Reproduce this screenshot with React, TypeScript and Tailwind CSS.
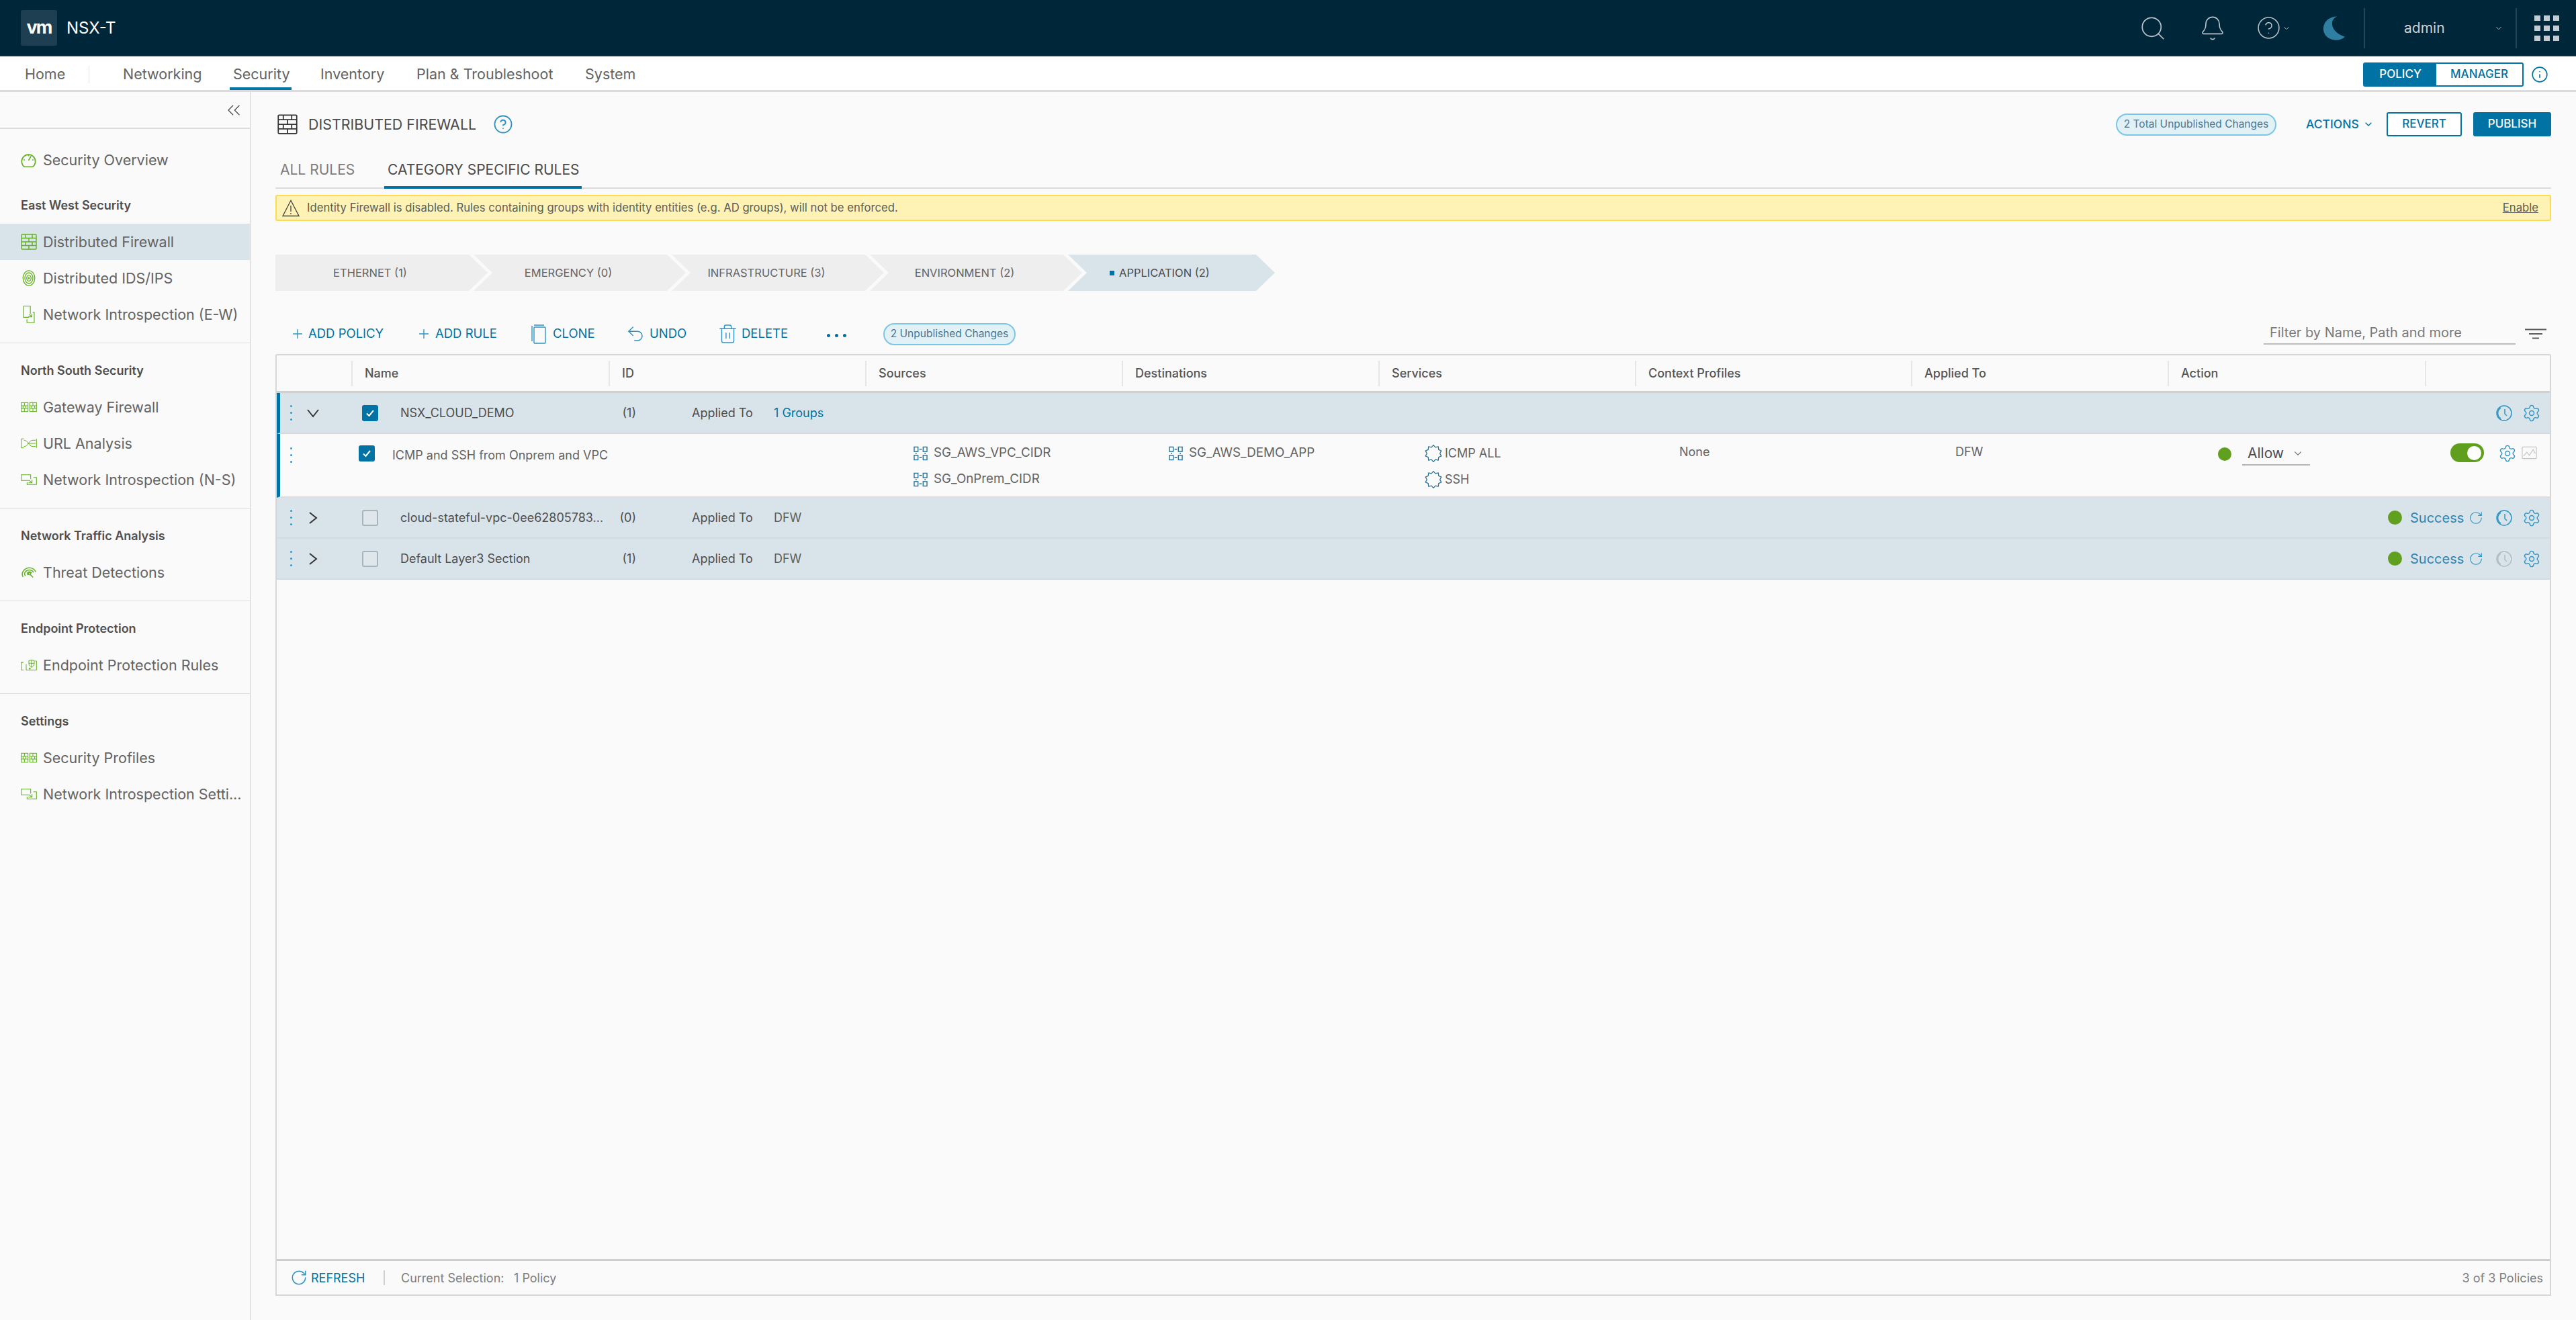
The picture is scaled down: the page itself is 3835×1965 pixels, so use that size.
import { Bell, ChevronDown, ChevronsLeft, CircleHelp, Info, Plus, RotateCw, Search, Settings, Trash2, Undo2 } from "lucide-react"

type IconProps = { className?: string }

const Firewall = ({ className }: IconProps) => (
    <svg viewBox="0 0 24 24" fill="none" stroke="currentColor" strokeWidth="1.4" className={className}>
        <rect x="1" y="1" width="22" height="22" rx="1" />
        <path d="M1 6.500h22M1 12h22M1 17.500h22M7 1v5.500M17 1v5.500M12 6.500V12M7 12v5.500M17 12v5.500M12 17.500V23" />
    </svg>
)

const DoubleWall = ({ className }: IconProps) => (
    <svg viewBox="0 0 36 22" fill="none" stroke="currentColor" strokeWidth="1.6" className={className}>
        <rect x="1" y="1" width="15" height="20" />
        <rect x="20" y="1" width="15" height="20" />
        <path d="M1 8h15M1 14h15M8 1v7M5 8v6M11 8v6M8 14v7M20 8h15M20 14h15M27 1v7M24 8v6M31 8v6M27 14v7" />
    </svg>
)

const Introspect = ({ className }: IconProps) => (
    <svg viewBox="0 0 36 24" fill="none" stroke="currentColor" strokeWidth="1.6" className={className}>
        <path d="M20 14H1V1h21v10" />
        <path d="M28 7h7v16H14v-5" />
        <path d="M17 19h8v-7M25 19l-6-5" />
    </svg>
)

const Introspect2 = ({ className }: IconProps) => (
    <svg viewBox="0 0 24 36" fill="none" stroke="currentColor" strokeWidth="1.6" className={className}>
        <path d="M12 24H1V1h14v16" />
        <path d="M20 14h3v21H8v-7" />
        <path d="M11 23h7v-6M18 23l-5-5" />
    </svg>
)

const Gauge = ({ className }: IconProps) => (
    <svg viewBox="0 0 24 28" fill="none" stroke="currentColor" strokeWidth="1.8" className={className}>
        <path d="M5 25a11 11 0 1 1 14 0z" />
        <path d="M12 15l4-7M4 14h2M18 14h2M12 6v2" />
    </svg>
)

const Rings = ({ className }: IconProps) => (
    <svg viewBox="0 0 24 30" fill="none" stroke="currentColor" strokeWidth="1.6" className={className}>
        <ellipse cx="12" cy="15" rx="11" ry="14" />
        <ellipse cx="12" cy="15" rx="7.500" ry="10" />
        <ellipse cx="12" cy="15" rx="4" ry="5.500" />
        <ellipse cx="12" cy="15" rx="1" ry="1.500" />
    </svg>
)

const UrlIcon = ({ className }: IconProps) => (
    <svg viewBox="0 0 36 22" fill="none" stroke="currentColor" strokeWidth="1.5" className={className}>
        <path d="M1 1v20h6M1 1h6M35 1v20" />
        <path d="M7 4c10 0 10 14 20 14h6M7 18c10 0 10-14 20-14h6M15 11h18" />
    </svg>
)

const Threat = ({ className }: IconProps) => (
    <svg viewBox="0 0 34 24" fill="none" stroke="currentColor" strokeWidth="2.2" className={className}>
        <path d="M5 22C-1 12 9 2 19 2c6 0 11 3 14 9" />
        <path d="M10 20C5 13 12 7 19 7c4 0 7 2 9 5" />
        <path d="M15 18c-3-4 1-7 4-7 2 0 4 1 5 3" />
        <circle cx="19" cy="15" r="2.400" />
        <path d="M21 17l6 6" />
    </svg>
)

const EndpointIcon = ({ className }: IconProps) => (
    <svg viewBox="0 0 36 24" fill="none" stroke="currentColor" strokeWidth="1.5" className={className}>
        <path d="M5 6H1v17h5M1 6h5M12 10v13h23V3h-3" />
        <path d="M18 2l6-1 6 1v7c0 4-3 6-6 8-3-2-6-4-6-8zM24 1v16M18 8h12" />
        <rect x="19" y="19" width="2" height="2" fill="currentColor" />
    </svg>
)

const GroupIcon = ({ className }: IconProps) => (
    <svg viewBox="0 0 22 22" fill="none" stroke="currentColor" strokeWidth="1.5" className={className}>
        <rect x="1" y="1" width="6" height="7" />
        <rect x="15" y="1" width="6" height="7" />
        <rect x="1" y="14" width="6" height="7" />
        <rect x="15" y="14" width="6" height="7" />
        <path d="M9 4.500h4M9 17.500h4M4 10v2M18 10v2" />
    </svg>
)

const serviceOutline = Array.from({ length: 20 }, (_, i) => {
    const r = i % 2 ? 9.6 : 12.4
    const a = (i * Math.PI) / 10
    return `${13 + r * Math.sin(a)},${13 - r * Math.cos(a)}`
}).join(" ")

const ServiceIcon = ({ className }: IconProps) => (
    <svg viewBox="0 0 26 26" fill="none" stroke="currentColor" strokeWidth="1.3" strokeLinejoin="round" className={className}>
        <polygon points={serviceOutline} />
    </svg>
)

const Clock = ({ className }: IconProps) => (
    <svg viewBox="0 0 24 24" fill="none" stroke="currentColor" strokeWidth="1.5" className={className}>
        <circle cx="12" cy="12" r="11" />
        <path d="M7 4a9.500 9.500 0 0 0 0 16" />
        <path d="M13 6v7l3 3" />
    </svg>
)

const Moon = ({ className }: IconProps) => (
    <svg viewBox="0 0 36 38" className={className}>
        <path d="M22 1C10 5 11 25 34 32c-5 4-10 6-16 5C7 36 0 28 1 18 2 8 11 1 22 1z" fill="#2f7fa3" />
    </svg>
)

const Warning = ({ className }: IconProps) => (
    <svg viewBox="0 0 26 26" fill="none" stroke="currentColor" strokeWidth="1.3" className={className}>
        <path d="M13 1.500L1 24.500h24z" />
        <path d="M13 9v9M13 20v2" />
    </svg>
)

const CloneIcon = ({ className }: IconProps) => (
    <svg viewBox="0 0 22 30" fill="none" stroke="currentColor" strokeWidth="1.4" className={className}>
        <rect x="4" y="5" width="17" height="24" rx="1" />
        <path d="M4 2h15M1 3v23" />
    </svg>
)

const FilterIcon = ({ className }: IconProps) => (
    <svg viewBox="0 0 32 16" stroke="currentColor" strokeWidth="2" className={className}>
        <path d="M0 1.500h32M6 8h20M11 14.500h10" />
    </svg>
)

const ChartBox = ({ className }: IconProps) => (
    <svg viewBox="0 0 24 20" fill="none" stroke="currentColor" strokeWidth="1.2" className={className}>
        <rect x="1" y="1" width="22" height="18" rx="1" />
        <path d="M3 15l5-6 4 5 6-9 3 6" />
    </svg>
)

const Caret = ({ open }: { open?: boolean }) => (
    <svg viewBox="0 0 24 24" fill="none" stroke="#333" strokeWidth="2" className="h-[24px] w-[24px]">
        <path d={open ? "M4 7l8 10 8-10" : "M7 4l10 8-10 8"} />
    </svg>
)

const DragDots = () => (
    <span className="flex h-[23px] w-[3px] flex-col justify-between">
        <span className="h-[3px] w-[3px] rounded-full bg-[#2f93c4]" />
        <span className="h-[3px] w-[3px] rounded-full bg-[#2f93c4]" />
        <span className="h-[3px] w-[3px] rounded-full bg-[#2f93c4]" />
    </span>
)

const Check = ({ checked }: { checked?: boolean }) =>
    checked ? (
        <span className="flex h-[24px] w-[24px] items-center justify-center rounded-[3px] bg-[#0072a3]">
            <svg viewBox="0 0 14 14" fill="none" stroke="#fff" strokeWidth="2" className="h-[14px] w-[14px]">
                <path d="M2 7.500l3.500 3.500L12 3" />
            </svg>
        </span>
    ) : (
        <span className="block h-[24px] w-[24px] rounded-[3px] border-2 border-[#a8b4bb] bg-[#dfe7ec]" />
    )

const Pill = ({ label, className }: { label: string; className: string }) => (
    <span className={`flex items-center justify-center rounded-full border-2 border-[#79c6e6] bg-[#e1f1f6] text-[15.5px] whitespace-nowrap text-[#4a7591] ${className}`}>
        {label}
    </span>
)

const sideSections = [
    {
        label: "North South Security",
        items: [
            { label: "Gateway Firewall", icon: <DoubleWall className="h-[22px] w-[24px]" /> },
            { label: "URL Analysis", icon: <UrlIcon className="h-[22px] w-[24px]" /> },
            { label: "Network Introspection (N-S)", icon: <Introspect className="h-[24px] w-[24px]" /> },
        ],
    },
    {
        label: "Network Traffic Analysis",
        items: [{ label: "Threat Detections", icon: <Threat className="h-[22px] w-[23px]" /> }],
    },
    {
        label: "Endpoint Protection",
        items: [{ label: "Endpoint Protection Rules", icon: <EndpointIcon className="h-[24px] w-[24px]" /> }],
    },
    {
        label: "Settings",
        items: [
            { label: "Security Profiles", icon: <DoubleWall className="h-[22px] w-[24px]" /> },
            { label: "Network Introspection Setti...", icon: <Introspect className="h-[24px] w-[24px]" /> },
        ],
    },
]

function SideItem({ icon, label, active }: { icon: React.ReactNode; label: string; active?: boolean }) {
    return (
        <div className={`flex h-[54px] items-center pl-[31px] ${active ? "bg-[#d9e4ea]" : ""}`}>
            <span className="flex w-[33px] items-center text-[#62b31f]">{icon}</span>
            <span className="text-[21.5px] whitespace-nowrap text-[#636363]">{label}</span>
        </div>
    )
}

const SideLabel = ({ label }: { label: string }) => (
    <div className="flex h-[68px] items-start pt-[27px] pl-[31px] text-[18px] font-semibold whitespace-nowrap text-[#4f4f4f]">{label}</div>
)

function Sidebar() {
    return (
        <aside className="h-full w-[374px] shrink-0 border-r-2 border-[#e3e3e3] bg-[#fafafa]">
            <div className="flex h-[55px] items-center justify-end border-b-2 border-[#dcdcdc] pr-[8px]">
                <ChevronsLeft className="h-[32px] w-[32px] text-[#565656]" strokeWidth={1.1} />
            </div>
            <div className="pt-[19px]">
                <SideItem label="Security Overview" icon={<Gauge className="h-[26px] w-[23px]" />} />
                <SideLabel label="East West Security" />
                <SideItem active label="Distributed Firewall" icon={<Firewall className="h-[24px] w-[24px]" />} />
                <SideItem label="Distributed IDS/IPS" icon={<Rings className="h-[24px] w-[24px]" />} />
                <SideItem label="Network Introspection (E-W)" icon={<Introspect2 className="h-[26px] w-[24px]" />} />
            </div>
            {sideSections.map((section) => (
                <div key={section.label} className="mt-[15px] border-t border-[#dedede] first:mt-[16px]">
                    <SideLabel label={section.label} />
                    {section.items.map((item) => (
                        <SideItem key={item.label} label={item.label} icon={item.icon} />
                    ))}
                </div>
            ))}
        </aside>
    )
}

function TopBar() {
    return (
        <header className="flex h-[84px] items-center border-b border-[#3c5a6a] bg-[#00263a] text-[#c9d1d6]">
            <div className="ml-[31px] flex h-[53px] w-[54px] items-center justify-center rounded-[3px] bg-[#1d3f51] text-[27px] font-bold tracking-[-2px] text-white">vm</div>
            <div className="ml-[14px] text-[24px] whitespace-nowrap text-white">NSX-T</div>
            <Search className="ml-auto h-[42px] w-[42px] text-[#b8c2c8]" strokeWidth={1} />
            <Bell className="ml-[48px] h-[40px] w-[40px] text-[#b8c2c8]" strokeWidth={1} />
            <CircleHelp className="ml-[45px] h-[37px] w-[37px] text-[#b8c2c8]" strokeWidth={1} />
            <ChevronDown className="ml-[1px] h-[14px] w-[14px] text-[#b8c2c8]" strokeWidth={1.5} />
            <Moon className="ml-[47px] h-[38px] w-[35px]" />
            <span className="ml-[26px] h-[60px] w-[2px] bg-[#22465a]" />
            <span className="ml-[58px] w-[61px] text-[21px] text-[#c9d1d6]">admin</span>
            <ChevronDown className="ml-[73px] h-[14px] w-[14px] text-[#b8c2c8]" strokeWidth={1.5} />
            <span className="ml-[18px] h-[60px] w-[2px] bg-[#22465a]" />
            <div className="mr-[25px] ml-[26px] grid grid-cols-3 gap-x-[5px] gap-y-[7px]">
                {Array.from({ length: 9 }).map((_, i) => (
                    <span key={i} className="h-[8px] w-[9px] bg-[#c4ccd1]" />
                ))}
            </div>
        </header>
    )
}

function NavBar() {
    return (
        <nav className="flex h-[53px] items-center border-b-[3px] border-[#dcdcdc] bg-white pt-[3px] text-[21.5px] whitespace-nowrap text-[#636363]">
            <span className="ml-[37px] w-[59px]">Home</span>
            <span className="ml-[36px] h-[26px] w-[1px] bg-[#e4e4e4]" />
            <span className="ml-[50px] w-[115px]">Networking</span>
            <span className="relative ml-[49px] flex h-full w-[81px] items-center">
                Security
                <span className="absolute top-[43px] -right-[6px] -left-[5px] h-[4px] bg-[#0072a3]" />
            </span>
            <span className="ml-[49px] w-[94px]">Inventory</span>
            <span className="ml-[49px] w-[203px]">Plan &amp; Troubleshoot</span>
            <span className="ml-[48px] w-[74px]">System</span>
            <div className="ml-auto flex h-[36px] w-[239px] overflow-hidden rounded-[3px] border-2 border-[#0072a3] text-[17px] font-medium">
                <span className="flex w-[107px] items-center justify-center bg-[#0072a3] text-white">POLICY</span>
                <span className="flex flex-1 items-center justify-center bg-white text-[#0072a3]">MANAGER</span>
            </div>
            <Info className="mr-[41px] ml-[11px] h-[26px] w-[26px] text-[#0072a3]" strokeWidth={1.5} />
        </nav>
    )
}

const categories = [
    { label: "ETHERNET (1)", shape: "ml-0 [clip-path:polygon(0_0,288px_0,316px_50%,288px_100%,0_100%)]" },
    { label: "EMERGENCY (0)", shape: "-ml-[21px] [clip-path:polygon(0_0,288px_0,316px_50%,288px_100%,0_100%,28px_50%)]" },
    { label: "INFRASTRUCTURE (3)", shape: "-ml-[21px] [clip-path:polygon(0_0,288px_0,316px_50%,288px_100%,0_100%,28px_50%)]" },
    { label: "ENVIRONMENT (2)", shape: "-ml-[21px] [clip-path:polygon(0_0,288px_0,316px_50%,288px_100%,0_100%,28px_50%)]" },
]

function Categories() {
    return (
        <div className="mt-[50px] flex h-[54px]">
            {categories.map((c) => (
                <div key={c.label} className={`flex h-full w-[316px] items-center bg-[#eeeeee] text-[16.5px] text-[#636363] ${c.shape}`}>
                    <span className="w-[282px] text-center">{c.label}</span>
                </div>
            ))}
            <div className="-ml-[21px] flex h-full w-[308px] items-center bg-[#d9e4ea] text-[16.5px] text-[#4a4a4a] [clip-path:polygon(0_0,280px_0,308px_50%,280px_100%,0_100%,28px_50%)]">
                <span className="ml-[62px] h-[7px] w-[7px] bg-[#0072a3]" />
                <span className="ml-[7px] whitespace-nowrap">APPLICATION (2)</span>
            </div>
        </div>
    )
}

function Toolbar() {
    const text = "text-[18.5px] text-[#0072a3] whitespace-nowrap"
    return (
        <div className="mt-[46px] flex h-[36px] items-center text-[#0072a3]">
            <Plus className="ml-[22px] h-[22px] w-[22px] text-[#2f93c4]" strokeWidth={1.5} />
            <span className={`ml-[5px] w-[113px] ${text}`}>ADD POLICY</span>
            <Plus className="ml-[48px] h-[22px] w-[22px] text-[#2f93c4]" strokeWidth={1.5} />
            <span className={`ml-[6px] w-[94px] ${text}`}>ADD RULE</span>
            <CloneIcon className="ml-[49px] h-[32px] w-[22px] text-[#2f93c4]" />
            <span className={`ml-[10px] w-[62px] ${text}`}>CLONE</span>
            <Undo2 className="ml-[46px] h-[32px] w-[30px] text-[#2f93c4]" strokeWidth={1.2} />
            <span className={`ml-[6px] w-[55px] ${text}`}>UNDO</span>
            <Trash2 className="ml-[46px] h-[34px] w-[31px] text-[#2f93c4]" strokeWidth={1.1} />
            <span className={`ml-[5px] w-[70px] ${text}`}>DELETE</span>
            <span className="ml-[57px] flex w-[29px] justify-between pt-[4px]">
                <span className="h-[5px] w-[5px] rounded-full bg-[#0072a3]" />
                <span className="h-[5px] w-[5px] rounded-full bg-[#0072a3]" />
                <span className="h-[5px] w-[5px] rounded-full bg-[#0072a3]" />
            </span>
            <Pill label="2 Unpublished Changes" className="ml-[55px] h-[33px] w-[197px]" />
            <div className="-mt-[2px] ml-auto flex h-[34px] w-[375px] items-center border-b-2 border-[#bdbdbd] pl-[9px] text-[20px] whitespace-nowrap text-[#7a7a7a]">Filter by Name, Path and more</div>
            <FilterIcon className="mr-[7px] ml-[14px] h-[16px] w-[32px] text-[#5c5c5c]" />
        </div>
    )
}

const columns = [
    { label: "", width: "w-[111px]" },
    { label: "Name", width: "w-[383px]" },
    { label: "ID", width: "w-[382px]" },
    { label: "Sources", width: "w-[382px]" },
    { label: "Destinations", width: "w-[382px]" },
    { label: "Services", width: "w-[382px]" },
    { label: "Context Profiles", width: "w-[411px]" },
    { label: "Applied To", width: "w-[382px]" },
    { label: "Action", width: "w-[383px]" },
    { label: "", width: "flex-1" },
]

function TableHead() {
    return (
        <div className="flex h-[56px] shrink-0 items-center border-b-[3px] border-[#d0d0d0] text-[18px] font-medium text-[#565656]">
            {columns.map((col, i) => (
                <div key={i} className={`flex h-[38px] items-center pl-[18px] ${col.width} ${i > 0 ? "border-l-2 border-[#e6e6e6]" : ""}`}>
                    {col.label}
                </div>
            ))}
        </div>
    )
}

function GroupRow(props: { open?: boolean; name: string; id: string; target: string; targetLink?: boolean; checked?: boolean; success?: boolean; clockOff?: boolean; selected?: boolean }) {
    const { open, name, id, target, targetLink, checked, success, clockOff, selected } = props
    return (
        <div className={`flex h-[61px] shrink-0 items-center border-b-2 border-[#d3dadf] bg-[#d9e4ea] text-[18px] text-[#4d4d4d] ${selected ? "border-l-[5px] border-l-[#0072a3]" : "pl-[5px]"}`}>
            <span className="flex w-[18px] justify-end"><DragDots /></span>
            <span className="ml-[19px] w-[24px]"><Caret open={open} /></span>
            <span className="ml-[61px] w-[24px]"><Check checked={checked} /></span>
            <span className="ml-[33px] w-[325px] truncate">{name}</span>
            <span className="w-[26px] text-right">{id}</span>
            <span className="ml-[83px] w-[122px] whitespace-nowrap">Applied To</span>
            <span className={targetLink ? "text-[#0072a3]" : "text-[#5c5c5c]"}>{target}</span>
            <div className="ml-auto flex items-center">
                {success && (
                    <>
                        <span className="h-[21px] w-[21px] rounded-full bg-[#60a01e]" />
                        <span className="ml-[12px] w-[87px] text-[20px] text-[#2f84b4]">Success</span>
                        <RotateCw className="h-[22px] w-[22px] text-[#2f93c4]" strokeWidth={1.3} />
                    </>
                )}
                <Clock className={`ml-[19px] h-[24px] w-[24px] ${clockOff ? "text-[#aebcc4]" : "text-[#2f93c4]"}`} />
                <Settings className="mr-[13px] ml-[15px] h-[28px] w-[28px] text-[#2f93c4]" strokeWidth={1.2} />
            </div>
        </div>
    )
}

const NameTag = ({ icon, label }: { icon: React.ReactNode; label: string }) => (
    <div className="flex h-[39px] items-center whitespace-nowrap">
        <span className="w-[30px] text-[#2d7396]">{icon}</span>
        {label}
    </div>
)

function RuleRow() {
    const group = <GroupIcon className="h-[22px] w-[21px]" />
    const service = <ServiceIcon className="h-[26px] w-[26px]" />
    return (
        <div className="flex h-[95px] shrink-0 items-start border-b-2 border-[#dcdcdc] border-l-[5px] border-l-[#0072a3] bg-[#fafafa] text-[18px] text-[#636363]">
            <span className="flex w-[18px] justify-end pt-[20px]"><DragDots /></span>
            <span className="ml-[99px] w-[50px] pt-[17px]"><Check checked /></span>
            <span className="w-[776px] pt-[18px] whitespace-nowrap">ICMP and SSH from Onprem and VPC</span>
            <div className="w-[380px] pt-[9px] text-[18.8px]">
                <NameTag icon={group} label="SG_AWS_VPC_CIDR" />
                <NameTag icon={group} label="SG_OnPrem_CIDR" />
            </div>
            <div className="w-[381px] pt-[9px] text-[18.8px]">
                <NameTag icon={group} label="SG_AWS_DEMO_APP" />
            </div>
            <div className="w-[379px] pt-[9px]">
                <NameTag icon={service} label="ICMP ALL" />
                <NameTag icon={service} label="SSH" />
            </div>
            <span className="w-[411px] pt-[13px]">None</span>
            <span className="w-[391px] pt-[13px]">DFW</span>
            <span className="mt-[20px] h-[20px] w-[20px] rounded-full bg-[#60a01e]" />
            <div className="mt-[8px] ml-[16px] flex h-[39px] w-[101px] items-center border-b-2 border-[#b5b5b5] pt-[4px] pl-[8px] text-[21px] text-[#4d4d4d]">
                Allow
                <ChevronDown className="ml-[12px] h-[18px] w-[18px] text-[#777]" strokeWidth={1.5} />
            </div>
            <span className="mt-[14px] ml-[209px] flex h-[28px] w-[50px] items-center justify-end rounded-full bg-[#5f9f1d] pr-[4px]">
                <span className="h-[21px] w-[21px] rounded-full bg-white" />
            </span>
            <Settings className="mt-[15px] ml-[21px] h-[28px] w-[28px] text-[#2f93c4]" strokeWidth={1.2} />
            <ChartBox className="mt-[18px] ml-[7px] h-[20px] w-[23px] text-[#c2c2c2]" />
        </div>
    )
}

function RulesTable() {
    return (
        <div className="mt-[12px] flex h-[1402px] flex-col rounded-t-[3px] border-2 border-[#d7d7d7] bg-[#fafafa]">
            <TableHead />
            <GroupRow open selected checked name="NSX_CLOUD_DEMO" id="(1)" target="1 Groups" targetLink />
            <RuleRow />
            <GroupRow success name="cloud-stateful-vpc-0ee62805783..." id="(0)" target="DFW" />
            <GroupRow success clockOff name="Default Layer3 Section" id="(1)" target="DFW" />
            <div className="mt-auto flex h-[53px] items-center border-t-[3px] border-[#d0d0d0] text-[18px] whitespace-nowrap text-[#7d7d7d]">
                <RotateCw className="ml-[20px] h-[26px] w-[26px] text-[#2f93c4]" strokeWidth={1.4} />
                <span className="ml-[5px] w-[82px] text-[#0072a3]">REFRESH</span>
                <span className="ml-[26px] h-[22px] w-[2px] bg-[#d0d0d0]" />
                <span className="ml-[24px] w-[153px]">Current Selection:</span>
                <span className="ml-[15px]">1 Policy</span>
                <span className="mr-[10px] ml-auto">3 of 3 Policies</span>
            </div>
        </div>
    )
}

function Main() {
    return (
        <main className="h-full flex-1 pr-[37px] pl-[36px]">
            <div className="mt-[30px] flex h-[36px] items-center">
                <Firewall className="h-[30px] w-[36px] text-[#333]" />
                <span className="ml-[13px] w-[248px] text-[21.4px] whitespace-nowrap text-[#4a4a4a]">DISTRIBUTED FIREWALL</span>
                <CircleHelp className="ml-[27px] h-[30px] w-[30px] text-[#2f93c4]" strokeWidth={1.5} />
                <Pill label="2 Total Unpublished Changes" className="ml-auto h-[33px] w-[239px]" />
                <span className="ml-[44px] w-[85px] text-[17.5px] font-medium whitespace-nowrap text-[#0072a3]">ACTIONS</span>
                <ChevronDown className="h-[16px] w-[16px] text-[#0072a3]" strokeWidth={2} />
                <span className="ml-[19px] flex h-[36px] w-[112px] items-center justify-center rounded-[3px] border-2 border-[#0072a3] bg-white text-[17px] font-medium text-[#0072a3]">REVERT</span>
                <span className="ml-[17px] flex h-[36px] w-[116px] items-center justify-center rounded-[3px] bg-[#0072a3] text-[17px] font-medium text-white">PUBLISH</span>
            </div>
            <div className="mt-[34px] flex h-[44px] items-end border-b-2 border-[#dcdcdc] text-[21px] whitespace-nowrap">
                <span className="ml-[7px] w-[111px] pb-[11px] text-[#7d7d7d]">ALL RULES</span>
                <span className="-mb-[2px] ml-[44px] w-[294px] border-b-[4px] border-[#0072a3] pb-[9px] pl-[5px] text-[#4a4a4a]">CATEGORY SPECIFIC RULES</span>
            </div>
            <div className="mt-[9px] flex h-[39px] items-center rounded-[3px] border-2 border-[#fbdb55] bg-[#fef3b5] text-[16.7px] text-[#5c5c5c]">
                <Warning className="ml-[8px] h-[26px] w-[26px] text-[#444]" />
                <span className="ml-[11px] whitespace-nowrap">Identity Firewall is disabled. Rules containing groups with identity entities (e.g. AD groups), will not be enforced.</span>
                <span className="mr-[17px] ml-auto underline">Enable</span>
            </div>
            <Categories />
            <Toolbar />
            <RulesTable />
        </main>
    )
}

export default function App() {
    return (
        <div className="flex h-[1965px] w-[3835px] flex-col overflow-hidden bg-[#fafafa] font-[Inter,sans-serif]">
            <TopBar />
            <NavBar />
            <div className="flex min-h-0 flex-1">
                <Sidebar />
                <Main />
            </div>
        </div>
    )
}
